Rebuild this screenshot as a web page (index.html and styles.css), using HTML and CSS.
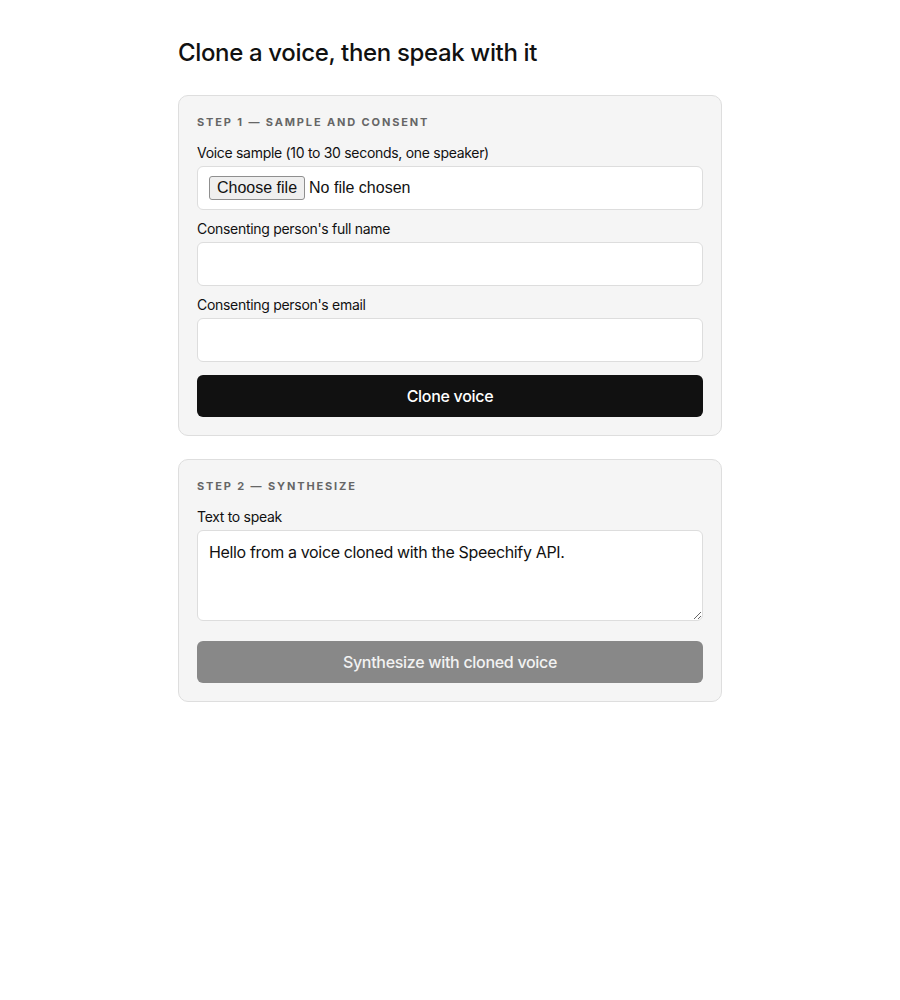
FILE: index.html
```html
<!DOCTYPE html>
<html lang="en">
<head>
<meta charset="utf-8">
<title>Clone a voice</title>
<link rel="stylesheet" href="styles.css">
</head>
<body>
<main class="page">
  <h1 class="title">Clone a voice, then speak with it</h1>

  <section class="card">
    <h2 class="step">Step 1 — Sample and consent</h2>
    <div class="field">
      <label class="label" for="sample">Voice sample (10 to 30 seconds, one speaker)</label>
      <div class="control file">
        <input class="file-input" id="sample" type="file" accept="audio/*">
        <label class="file-btn" for="sample">Choose file</label>
        <span class="file-name">No file chosen</span>
      </div>
    </div>
    <div class="field">
      <label class="label" for="name">Consenting person's full name</label>
      <input class="control" id="name" type="text">
    </div>
    <div class="field field-last">
      <label class="label" for="email">Consenting person's email</label>
      <input class="control" id="email" type="email">
    </div>
    <button class="btn" type="button">Clone voice</button>
  </section>

  <section class="card">
    <h2 class="step">Step 2 — Synthesize</h2>
    <div class="field field-area">
      <label class="label" for="text">Text to speak</label>
      <textarea class="control area" id="text">Hello from a voice cloned with the Speechify API.</textarea>
    </div>
    <button class="btn btn-disabled" type="button" disabled>Synthesize with cloned voice</button>
  </section>
</main>
</body>
</html>
```

FILE: styles.css
```css
* { box-sizing: border-box; }

body {
  margin: 0;
  background: #ffffff;
  color: #111111;
  font-family: Inter, "Helvetica Neue", Arial, sans-serif;
}

.page {
  width: 544px;
  margin: 0 auto;
  padding-top: 38px;
}

.title {
  margin: 0 0 27px 0;
  font-size: 24px;
  line-height: 30px;
  font-weight: 500;
  letter-spacing: -0.35px;
  color: #111111;
}

.card {
  background: #f5f5f5;
  border: 1px solid #dedede;
  border-radius: 10px;
  padding: 18px;
  margin-bottom: 23px;
}

.step {
  margin: 0 0 14px 0;
  font-size: 11px;
  line-height: 16px;
  font-weight: 700;
  letter-spacing: 0.17em;
  text-transform: uppercase;
  color: #666666;
}

.field {
  margin-bottom: 10px;
}

.field-last {
  margin-bottom: 13px;
}

.field-area {
  margin-bottom: 20px;
}

.label {
  display: block;
  font-size: 14px;
  line-height: 18px;
  letter-spacing: -0.3px;
  margin-bottom: 4px;
  color: #111111;
}

.control {
  display: block;
  width: 100%;
  height: 44px;
  background: #ffffff;
  border: 1px solid #dddddd;
  border-radius: 6px;
  padding: 10px 11px;
  font-family: Inter, "Helvetica Neue", Arial, sans-serif;
  font-size: 16px;
  line-height: 22px;
  letter-spacing: -0.35px;
  color: #111111;
}

.file {
  display: flex;
  align-items: center;
  gap: 4px;
  padding: 0 11px;
  font-family: "Liberation Sans", Arial, sans-serif;
  letter-spacing: 0;
}

.file-input {
  display: none;
}

.file-btn {
  display: flex;
  align-items: center;
  height: 24px;
  padding: 0 7px;
  background: #efefef;
  border: 1px solid #8f8f8f;
  border-radius: 3px;
  font-size: 16px;
  color: #111111;
}

.file-name {
  font-size: 16px;
  color: #111111;
}

.area {
  height: 91px;
  resize: vertical;
}

.btn {
  display: block;
  width: 100%;
  height: 42px;
  border: none;
  border-radius: 6px;
  background: #111111;
  color: #ffffff;
  font-family: Inter, "Helvetica Neue", Arial, sans-serif;
  font-size: 16px;
  font-weight: 500;
  letter-spacing: -0.3px;
}

.btn-disabled {
  background: #888888;
  color: #f2f2f2;
}
```
